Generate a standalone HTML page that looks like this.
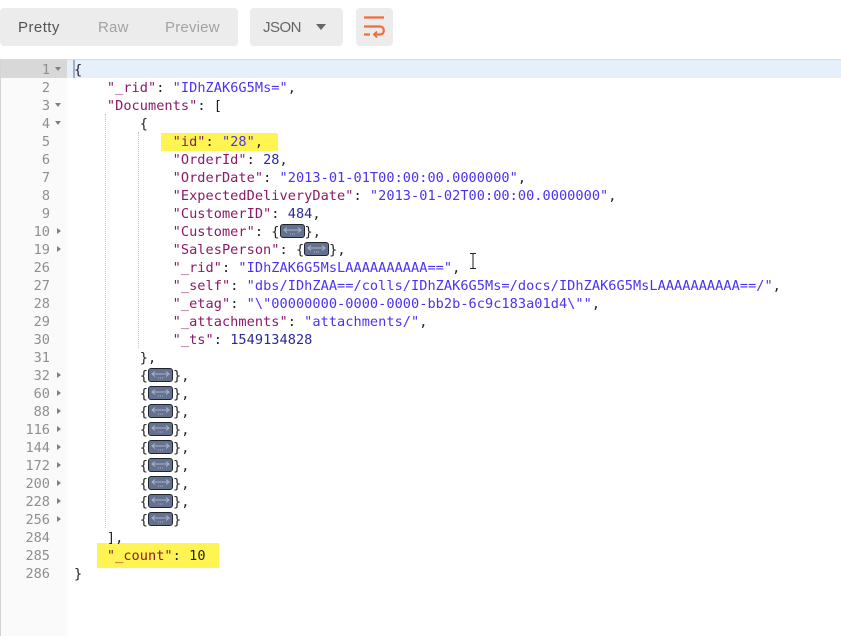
<!DOCTYPE html>
<html><head><meta charset="utf-8">
<style>
html,body{margin:0;padding:0;background:#fff}
body{width:841px;height:636px;overflow:hidden;position:relative;font-family:"Liberation Sans",sans-serif}
.abs{position:absolute}
.btn{position:absolute;background:#ececec;border-radius:4px;top:8px;height:38px}
.t{position:absolute;top:19px;font-size:15px;line-height:18px}
#code{position:absolute;left:0;top:1px;width:841px;height:600px}
#code div.l{position:absolute;left:74px;height:18px;line-height:18px;white-space:pre;font-family:"DejaVu Sans Mono",monospace;font-size:13.6px;letter-spacing:.035px;color:#222}
.k{color:#8a1a68}.s{color:#4b33f0}.n{color:#2a2a9a}
.num{position:absolute;width:50px;left:0;text-align:right;height:18px;line-height:18px;font-family:"DejaVu Sans Mono",monospace;font-size:13.6px;color:#8f8f8f}
.f{display:inline-block;width:25px;height:14px;box-sizing:border-box;background:#64718f;border:1px solid #20242e;border-radius:3px;vertical-align:-2px;position:relative}
.f svg{position:absolute;left:1px;top:1px}
.ar{position:absolute;left:55px;width:0;height:0;margin-top:-1px}
.d{border-left:3.500px solid transparent;border-right:3.500px solid transparent;border-top:4px solid #808080}
.r{border-top:3px solid transparent;border-bottom:3px solid transparent;border-left:4px solid #808080;left:57px}
.g{position:absolute;width:0;border-left:1px dotted #c4c4c4}
</style></head><body>
<div class="btn" style="left:0;width:238px"></div>
<div class="t" style="left:18px;color:#555;letter-spacing:.45px">Pretty</div>
<div class="t" style="left:98px;color:#a3a3a3;letter-spacing:.2px">Raw</div>
<div class="t" style="left:165px;color:#a3a3a3;letter-spacing:.2px">Preview</div>
<div class="btn" style="left:250px;width:93px"></div>
<div class="t" style="left:263px;color:#666;letter-spacing:-.5px">JSON</div>
<div class="abs" style="left:316px;top:24px;width:0;height:0;border-left:5px solid transparent;border-right:5px solid transparent;border-top:6px solid #666"></div>
<div class="btn" style="left:356px;width:37px"></div>
<svg class="abs" style="left:356px;top:8px" width="37" height="38" viewBox="0 0 37 38" fill="none" stroke="#f26b3a" stroke-width="2.200">
<path d="M8 9.500H28"/><path d="M8 18.500H24c5 0 5 8 0 8H19"/><path d="M8 26.500H14"/><path d="M21 23.500l-3 3 3 3" stroke-width="1.800"/>
</svg>

<div class="abs" style="left:0;top:59px;width:841px;height:1px;background:#dcdcdc"></div>
<div class="abs" style="left:0;top:60px;width:1px;height:576px;background:#d4d4d4"></div>
<div class="abs" style="left:1px;top:60px;width:66px;height:576px;background:#fafafa"></div>
<div class="abs" style="left:1px;top:60px;width:66px;height:18px;background:#d8d8d8"></div>
<div class="abs" style="left:67px;top:60px;width:774px;height:18px;background:#e6f0fb"></div>
<div class="abs" style="left:73px;top:60px;width:2px;height:18px;background:#9fb0c4"></div>

<div class="abs" style="left:161px;top:133px;width:117px;height:18px;background:#fff451"></div>
<div class="abs" style="left:97px;top:543px;width:122px;height:25px;background:#fff451"></div>

<div class="g" style="left:105px;top:114px;height:414px"></div>
<div class="g" style="left:138px;top:132px;height:216px"></div>

<div id="code">
<div class="num" style="top:60px">1</div><div class="num" style="top:78px">2</div><div class="num" style="top:96px">3</div><div class="num" style="top:114px">4</div><div class="num" style="top:132px">5</div><div class="num" style="top:150px">6</div><div class="num" style="top:168px">7</div><div class="num" style="top:186px">8</div><div class="num" style="top:204px">9</div><div class="num" style="top:222px">10</div><div class="num" style="top:240px">19</div><div class="num" style="top:258px">26</div><div class="num" style="top:276px">27</div><div class="num" style="top:294px">28</div><div class="num" style="top:312px">29</div><div class="num" style="top:330px">30</div><div class="num" style="top:348px">31</div><div class="num" style="top:366px">32</div><div class="num" style="top:384px">60</div><div class="num" style="top:402px">88</div><div class="num" style="top:420px">116</div><div class="num" style="top:438px">144</div><div class="num" style="top:456px">172</div><div class="num" style="top:474px">200</div><div class="num" style="top:492px">228</div><div class="num" style="top:510px">256</div><div class="num" style="top:528px">284</div><div class="num" style="top:546px">285</div><div class="num" style="top:564px">286</div>

<div class="ar d" style="top:67px"></div><div class="ar d" style="top:103px"></div><div class="ar d" style="top:121px"></div>
<div class="ar r" style="top:228px"></div><div class="ar r" style="top:246px"></div>
<div class="ar r" style="top:372px"></div><div class="ar r" style="top:390px"></div><div class="ar r" style="top:408px"></div><div class="ar r" style="top:426px"></div><div class="ar r" style="top:444px"></div><div class="ar r" style="top:462px"></div><div class="ar r" style="top:480px"></div><div class="ar r" style="top:498px"></div><div class="ar r" style="top:516px"></div>

<div class="l" style="top:60px">{</div>
<div class="l" style="top:78px">    <span class="k">"_rid"</span>: <span class="s">"IDhZAK6G5Ms="</span>,</div>
<div class="l" style="top:96px">    <span class="k">"Documents"</span>: [</div>
<div class="l" style="top:114px">        {</div>
<div class="l" style="top:132px">            <span class="k">"id"</span>: <span class="s">"28"</span>,</div>
<div class="l" style="top:150px">            <span class="k">"OrderId"</span>: <span class="n">28</span>,</div>
<div class="l" style="top:168px">            <span class="k">"OrderDate"</span>: <span class="s">"2013-01-01T00:00:00.0000000"</span>,</div>
<div class="l" style="top:186px">            <span class="k">"ExpectedDeliveryDate"</span>: <span class="s">"2013-01-02T00:00:00.0000000"</span>,</div>
<div class="l" style="top:204px">            <span class="k">"CustomerID"</span>: <span class="n">484</span>,</div>
<div class="l" style="top:222px">            <span class="k">"Customer"</span>: {<span class="f"><svg width="21" height="10" fill="none" stroke="#aab4c8"><path d="M2 4H19M5 1.500L2 4l3 2.500M16 1.500L19 4l-3 2.500"/><path d="M8 8h6" stroke-dasharray="1 1"/></svg></span>},</div>
<div class="l" style="top:240px">            <span class="k">"SalesPerson"</span>: {<span class="f"><svg width="21" height="10" fill="none" stroke="#aab4c8"><path d="M2 4H19M5 1.500L2 4l3 2.500M16 1.500L19 4l-3 2.500"/><path d="M8 8h6" stroke-dasharray="1 1"/></svg></span>},</div>
<div class="l" style="top:258px">            <span class="k">"_rid"</span>: <span class="s">"IDhZAK6G5MsLAAAAAAAAAA=="</span>,</div>
<div class="l" style="top:276px">            <span class="k">"_self"</span>: <span class="s">"dbs/IDhZAA==/colls/IDhZAK6G5Ms=/docs/IDhZAK6G5MsLAAAAAAAAAA==/"</span>,</div>
<div class="l" style="top:294px">            <span class="k">"_etag"</span>: <span class="s">"\"00000000-0000-0000-bb2b-6c9c183a01d4\""</span>,</div>
<div class="l" style="top:312px">            <span class="k">"_attachments"</span>: <span class="s">"attachments/"</span>,</div>
<div class="l" style="top:330px">            <span class="k">"_ts"</span>: <span class="n">1549134828</span></div>
<div class="l" style="top:348px">        },</div>
<div class="l" style="top:366px">        {<span class="f"><svg width="21" height="10" fill="none" stroke="#aab4c8"><path d="M2 4H19M5 1.500L2 4l3 2.500M16 1.500L19 4l-3 2.500"/><path d="M8 8h6" stroke-dasharray="1 1"/></svg></span>},</div>
<div class="l" style="top:384px">        {<span class="f"><svg width="21" height="10" fill="none" stroke="#aab4c8"><path d="M2 4H19M5 1.500L2 4l3 2.500M16 1.500L19 4l-3 2.500"/><path d="M8 8h6" stroke-dasharray="1 1"/></svg></span>},</div>
<div class="l" style="top:402px">        {<span class="f"><svg width="21" height="10" fill="none" stroke="#aab4c8"><path d="M2 4H19M5 1.500L2 4l3 2.500M16 1.500L19 4l-3 2.500"/><path d="M8 8h6" stroke-dasharray="1 1"/></svg></span>},</div>
<div class="l" style="top:420px">        {<span class="f"><svg width="21" height="10" fill="none" stroke="#aab4c8"><path d="M2 4H19M5 1.500L2 4l3 2.500M16 1.500L19 4l-3 2.500"/><path d="M8 8h6" stroke-dasharray="1 1"/></svg></span>},</div>
<div class="l" style="top:438px">        {<span class="f"><svg width="21" height="10" fill="none" stroke="#aab4c8"><path d="M2 4H19M5 1.500L2 4l3 2.500M16 1.500L19 4l-3 2.500"/><path d="M8 8h6" stroke-dasharray="1 1"/></svg></span>},</div>
<div class="l" style="top:456px">        {<span class="f"><svg width="21" height="10" fill="none" stroke="#aab4c8"><path d="M2 4H19M5 1.500L2 4l3 2.500M16 1.500L19 4l-3 2.500"/><path d="M8 8h6" stroke-dasharray="1 1"/></svg></span>},</div>
<div class="l" style="top:474px">        {<span class="f"><svg width="21" height="10" fill="none" stroke="#aab4c8"><path d="M2 4H19M5 1.500L2 4l3 2.500M16 1.500L19 4l-3 2.500"/><path d="M8 8h6" stroke-dasharray="1 1"/></svg></span>},</div>
<div class="l" style="top:492px">        {<span class="f"><svg width="21" height="10" fill="none" stroke="#aab4c8"><path d="M2 4H19M5 1.500L2 4l3 2.500M16 1.500L19 4l-3 2.500"/><path d="M8 8h6" stroke-dasharray="1 1"/></svg></span>},</div>
<div class="l" style="top:510px">        {<span class="f"><svg width="21" height="10" fill="none" stroke="#aab4c8"><path d="M2 4H19M5 1.500L2 4l3 2.500M16 1.500L19 4l-3 2.500"/><path d="M8 8h6" stroke-dasharray="1 1"/></svg></span>}</div>
<div class="l" style="top:528px">    ],</div>
<div class="l" style="top:546px">    <span class="k" style="color:#8a1a30">"_count"</span>: <span class="n" style="color:#222">10</span></div>
<div class="l" style="top:564px">}</div>
</div>

<svg class="abs" style="left:467px;top:252px" width="12" height="18" viewBox="0 0 12 18" fill="none" stroke="#222" stroke-width="1"><path d="M3 1.500H9M6 1.500V16.500M3 16.500H9"/></svg>
</body></html>
